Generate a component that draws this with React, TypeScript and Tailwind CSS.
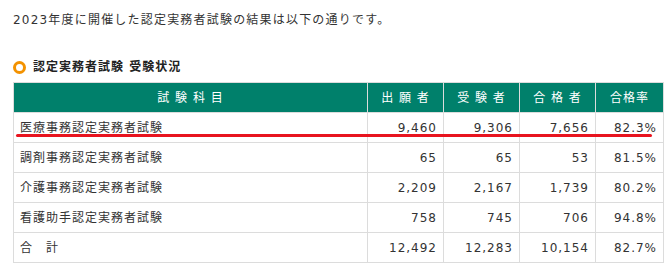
import React from 'react';

interface Row {
  name: string;
  applied: string;
  examined: string;
  passed: string;
  rate: string;
}

const rows: Row[] = [
  { name: '医療事務認定実務者試験', applied: '9,460', examined: '9,306', passed: '7,656', rate: '82.3%' },
  { name: '調剤事務認定実務者試験', applied: '65', examined: '65', passed: '53', rate: '81.5%' },
  { name: '介護事務認定実務者試験', applied: '2,209', examined: '2,167', passed: '1,739', rate: '80.2%' },
  { name: '看護助手認定実務者試験', applied: '758', examined: '745', passed: '706', rate: '94.8%' },
  { name: '合\u3000計', applied: '12,492', examined: '12,283', passed: '10,154', rate: '82.7%' },
];

const font = "font-['DejaVu_Sans','Noto_Sans_CJK_JP',sans-serif]";

const App: React.FC = () => {
  return (
    <div className={`w-[670px] h-[273px] bg-white pl-[13px] pt-[10px] text-[12px] tracking-[1px] text-[#333] ${font}`}>
      {/* Intro */}
      <p className="leading-[20px] tracking-[1.2px]">2023年度に開催した認定実務者試験の結果は以下の通りです。</p>

      {/* Heading */}
      <div className="mt-[27px] flex items-center gap-[7px] h-[20px]">
        <span className="shrink-0 w-[13px] h-[13px] rounded-full border-[3px] border-[#f39200]" />
        <h3 className="font-bold text-[#222]">認定実務者試験 受験状況</h3>
      </div>

      {/* Table */}
      <div className="relative mt-[5px] w-[650px]">
        <table className="w-[650px] border-collapse table-fixed border border-[#dcdcdc]">
          <colgroup>
            <col className="w-[354px]" />
            <col className="w-[76px]" />
            <col className="w-[76px]" />
            <col className="w-[76px]" />
            <col className="w-[68px]" />
          </colgroup>
          <thead>
            <tr className="bg-[#00806b] text-white h-[30px]">
              <th className="font-normal text-center border border-[#dcdcdc]">試 験 科 目</th>
              <th className="font-normal text-center border border-[#dcdcdc]">出 願 者</th>
              <th className="font-normal text-center border border-[#dcdcdc]">受 験 者</th>
              <th className="font-normal text-center border border-[#dcdcdc]">合 格 者</th>
              <th className="font-normal text-center border border-[#dcdcdc]">合格率</th>
            </tr>
          </thead>
          <tbody>
            {rows.map((r) => (
              <tr key={r.name} className="h-[30px]">
                <td className="px-[6px] border border-[#dcdcdc]">{r.name}</td>
                <td className="pr-[6px] text-right border border-[#dcdcdc]">{r.applied}</td>
                <td className="pr-[6px] text-right border border-[#dcdcdc]">{r.examined}</td>
                <td className="pr-[6px] text-right border border-[#dcdcdc]">{r.passed}</td>
                <td className="pr-[6px] text-right border border-[#dcdcdc]">{r.rate}</td>
              </tr>
            ))}
          </tbody>
        </table>
        {/* red underline marker */}
        <span className="absolute left-[3px] top-[52px] w-[636px] h-[3px] rounded-full bg-[#e8141f]" />
      </div>
    </div>
  );
};

export default App;
